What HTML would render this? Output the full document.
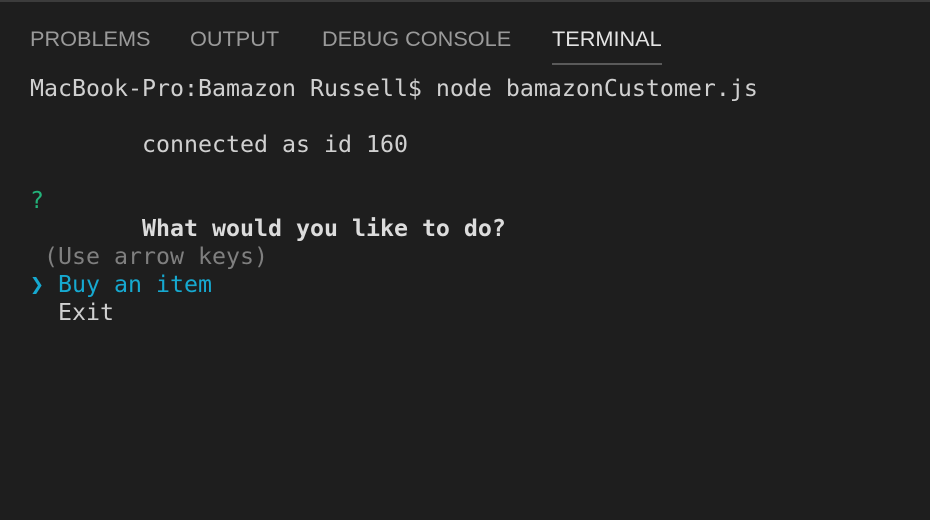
<!DOCTYPE html>
<html><head><style>
html,body{margin:0;padding:0;background:#1e1e1e;width:930px;height:520px;overflow:hidden}
.top{position:absolute;left:0;top:0;width:930px;height:2px;background:#3c3c3c}
.tab{position:absolute;top:26px;font-family:"Liberation Sans",sans-serif;font-size:21.7px;color:#9a9a9a;line-height:26px;white-space:nowrap}
.ul{position:absolute;left:552px;top:63px;width:110px;height:2px;background:#5a5a5a}
.term{position:absolute;left:30px;top:75px;font-family:"DejaVu Sans Mono",monospace;font-size:23.25px;line-height:28px;color:#d0d0d0;white-space:pre;margin:0}
.g{color:#23b37a}.b{font-weight:bold;color:#dcdcdc}.d{color:#7f7f7f}.c{color:#16a9d0}
</style></head><body>
<div class="top"></div>
<div class="tab" style="left:30px">PROBLEMS</div>
<div class="tab" style="left:190px">OUTPUT</div>
<div class="tab" style="left:322px">DEBUG CONSOLE</div>
<div class="tab" style="left:552px;color:#e4e4e4">TERMINAL</div>
<div class="ul"></div>
<pre class="term">MacBook-Pro:Bamazon Russell$ node bamazonCustomer.js

        connected as id 160

<span class="g">?</span>
        <span class="b">What would you like to do?</span>
 <span class="d">(Use arrow keys)</span>
<span class="c">❯ Buy an item</span>
  Exit</pre>
</body></html>
